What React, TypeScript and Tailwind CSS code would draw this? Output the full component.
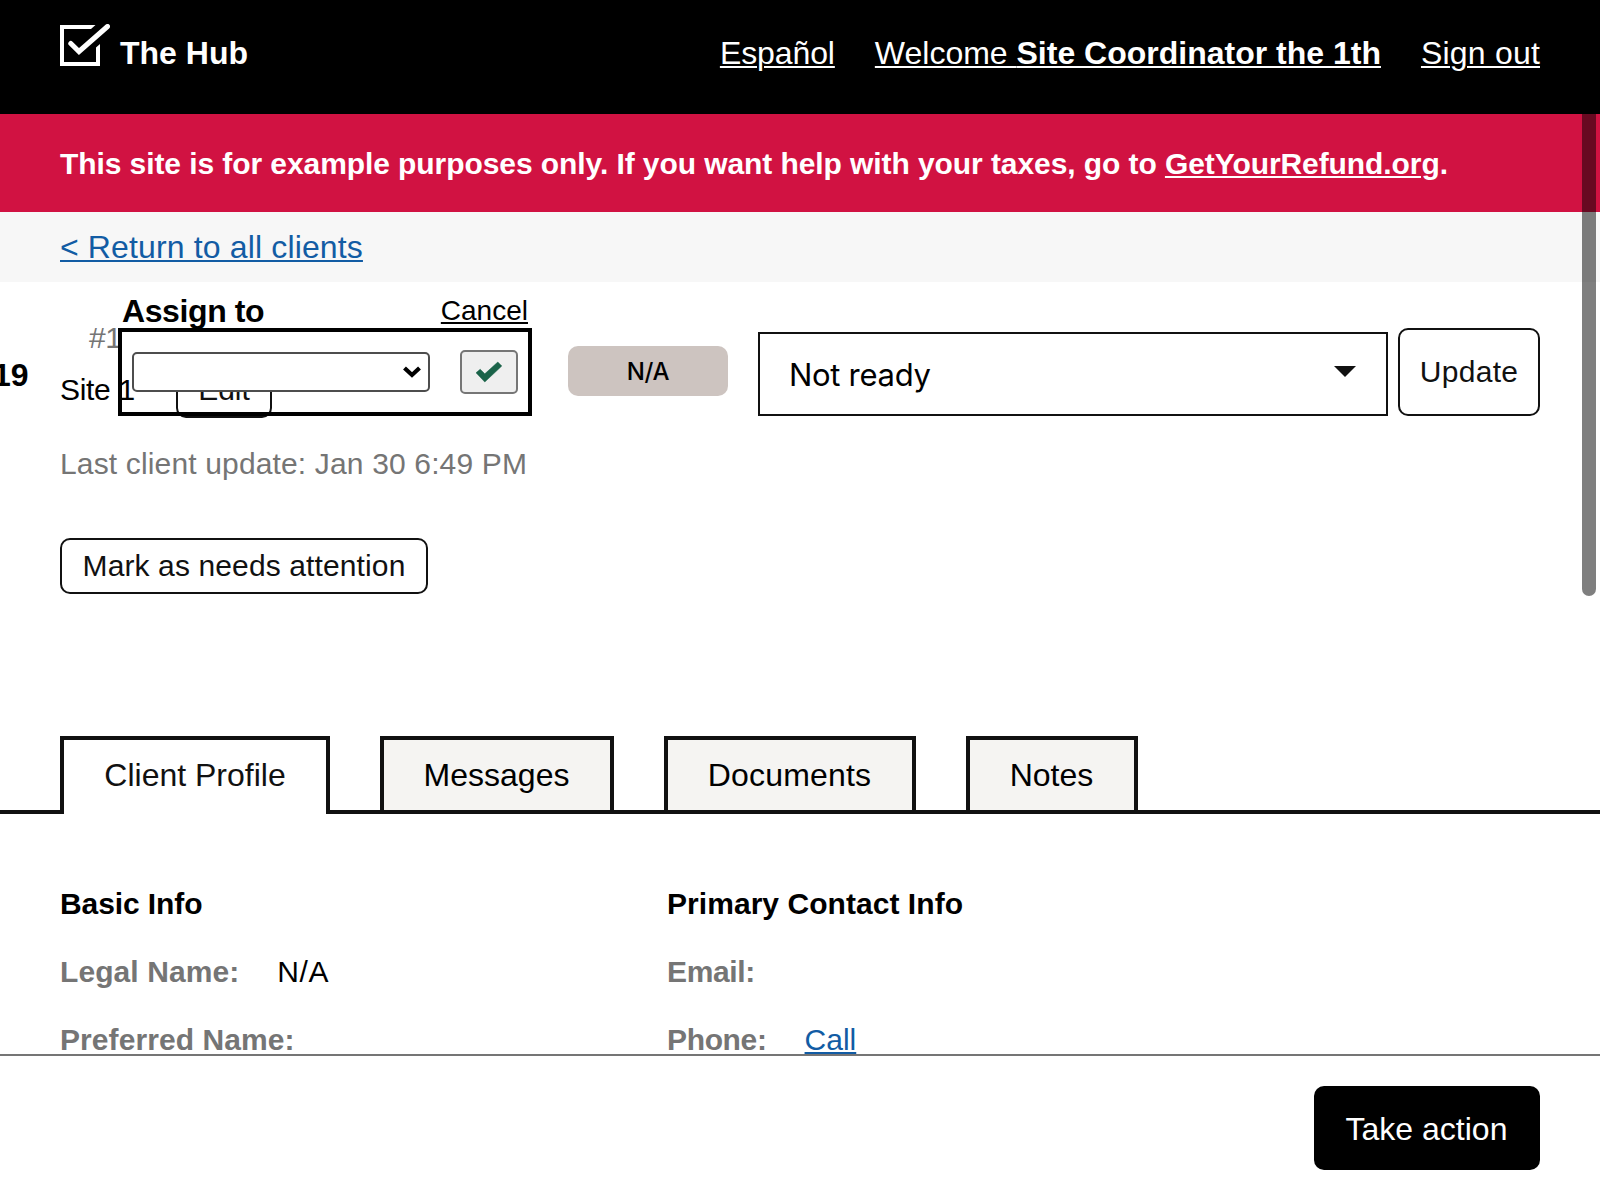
import React from "react";

const link = "underline decoration-2 underline-offset-[2px]";

function Logo() {
  return (
    <svg width="50" height="44" viewBox="0 0 50 44" fill="none" className="mt-6 shrink-0">
      <path d="M35.5 1L31 5H4V38H36V23.5L40 20V42H0V1Z" fill="#fff" />
      <path d="M10.800 19.500L19 27.500L47.500 2.500" stroke="#fff" strokeWidth="5" strokeLinecap="round" />
    </svg>
  );
}

function Header() {
  return (
    <header className="flex h-[114px] shrink-0 justify-between bg-black px-[60px] text-[32px] leading-[40px] text-white">
      <div className="flex gap-[10px]">
        <Logo />
        <span className="mt-[33px] font-bold">The Hub</span>
      </div>
      <nav className="mt-[33px] flex gap-[40px]">
        <a className={`${link} tracking-[-0.1px]`}>Español</a>
        <a className={link}>
          Welcome <b>Site Coordinator the 1th</b>
        </a>
        <a className={`${link} tracking-[0.2px]`}>Sign out</a>
      </nav>
    </header>
  );
}

function AssignPopup() {
  return (
    <div className="absolute left-[118px] top-[10px] w-[414px]">
      <div className="flex h-[36px] items-center justify-between pl-[4px] pr-1 pt-[2px]">
        <span className="text-[32px] font-bold leading-[40px] tracking-[-0.4px]">Assign to</span>
        <a className={`${link} text-[28px] leading-[36px]`}>Cancel</a>
      </div>
      <div className="flex h-[88px] items-center justify-between border-4 border-black px-[10px]">
        <div className="flex h-[40px] w-[298px] items-center justify-end rounded-[5px] border-2 border-[#4d4d4d] bg-white pr-[7px]">
          <svg width="18" height="12" viewBox="0 0 18 12" fill="none">
            <path d="M1.500 2L9 9L16.500 2" stroke="#000" strokeWidth="4.200" />
          </svg>
        </div>
        <div className="flex h-[44px] w-[58px] items-center justify-center rounded-[5px] border-2 border-[#767676] bg-[#efefef]">
          <svg width="26" height="22" viewBox="0 0 26 22" fill="none">
            <path d="M0 11.800L4.200 8.200L8.800 12.800L21.800 1L25.800 5L8.800 21Z" fill="#1a6349" stroke="#1a6349" strokeWidth="0.500" strokeLinejoin="round" />
          </svg>
        </div>
      </div>
    </div>
  );
}

const outline = "flex items-center justify-center rounded-[10px] border-2 border-[#111] text-[#111]";

function ClientHeader() {
  return (
    <section className="relative flex h-[454px] shrink-0 px-[60px] text-[30px] leading-[36px]">
      <div className="absolute left-0 top-[73px] -ml-[7px] text-[32px] font-bold leading-[40px]">19</div>
      <div className="w-[508px] shrink-0 pt-[38px]">
        <div className="pl-[29px] tracking-[-0.5px] text-[#757575]">#1</div>
        <div className="mt-[6px] flex items-center">
          <span className="w-[116px] whitespace-nowrap tracking-[-0.3px]">Site 1</span>
          <div className={`${outline} h-[56px] w-[96px]`}>Edit</div>
        </div>
        <div className="mt-[28px] tracking-[0.150px] text-[#757575]">Last client update: Jan 30 6:49 PM</div>
        <div className={`${outline} mt-[56px] h-[56px] w-[368px] tracking-[0.12px]`}>Mark as needs attention</div>
      </div>
      <div className="mt-[46px] flex h-[88px] flex-1 items-end">
        <div className="mb-5 mr-[30px] flex h-[50px] w-[160px] items-center justify-center rounded-[10px] bg-[#cdc4c0] pt-[2px] font-[Inter] text-[24px] font-medium tracking-[-0.4px]">
          N/A
        </div>
        <div className="flex h-[84px] flex-1 items-center justify-between border-2 border-[#111] pl-[29px] pr-[30px]">
          <span className="pt-[2px] font-[Inter] text-[31px] tracking-[-0.3px]">Not ready</span>
          <svg width="22" height="11" viewBox="0 0 22 11" className="-mt-[5px]">
            <path d="M0 0H22L11 11Z" fill="#111" />
          </svg>
        </div>
        <div className={`${outline} ml-[10px] h-[88px] w-[142px] tracking-[0.300px]`}>Update</div>
      </div>
      <AssignPopup />
    </section>
  );
}

function Tabs() {
  const tab = "flex h-[74px] items-center justify-center border-x-4 border-t-4 border-[#111] bg-[#f5f4f2] pr-[1px]";
  return (
    <nav className="flex h-[78px] shrink-0 gap-[50px] border-b-4 border-[#111] pl-[60px] text-[32px]">
      <div className="z-10 flex h-[78px] w-[270px] justify-center border-x-4 border-t-4 border-[#111] bg-white leading-[70px] text-[#111]">
        Client Profile
      </div>
      <div className={`${tab} w-[234px]`}>Messages</div>
      <div className={`${tab} w-[252px] tracking-[0.2px]`}>Documents</div>
      <div className={`${tab} w-[172px]`}>Notes</div>
    </nav>
  );
}

function Field({ label, children }: { label: string; children?: React.ReactNode }) {
  return (
    <div className="mt-[32px] flex gap-[38px]">
      <b className="text-[#757575]">{label}</b>
      {children}
    </div>
  );
}

export default function App() {
  return (
    <div className="relative flex h-[1200px] w-[1600px] flex-col overflow-hidden bg-white font-['Liberation_Sans',Arial,sans-serif] text-black">
      <Header />
      <div className="flex h-[98px] shrink-0 items-center bg-[#d11242] pl-[60px] text-[30px] font-bold text-white">
        <p className="whitespace-nowrap tracking-[-0.08px]">
          This site is for example purposes only. If you want help with your taxes, go to{" "}
          <a className={link}>GetYourRefund.org</a>.
        </p>
      </div>
      <div className="flex h-[70px] shrink-0 items-center bg-[#f7f7f7] pl-[60px] text-[32px]">
        <a className={`${link} tracking-[0.14px] text-[#125ca4]`}>&lt; Return to all clients</a>
      </div>
      <ClientHeader />
      <Tabs />
      <main className="flex min-h-0 flex-1 overflow-hidden pl-[60px] pt-[72px] text-[30px] leading-[36px]">
        <div className="w-[607px] tracking-[0.080px]">
          <h2 className="font-bold tracking-[-0.100px]">Basic Info</h2>
          <Field label="Legal Name:">
            <span className="tracking-[0.600px]">N/A</span>
          </Field>
          <Field label="Preferred Name:" />
        </div>
        <div className="tracking-[-0.350px]">
          <h2 className="font-bold tracking-[0.050px]">Primary Contact Info</h2>
          <Field label="Email:" />
          <Field label="Phone:">
            <a className={`${link} tracking-[0px] text-[#125ca4]`}>Call</a>
          </Field>
        </div>
      </main>
      <footer className="flex h-[146px] shrink-0 justify-end border-t-2 border-[#757575] bg-white pr-[60px] pt-[30px]">
        <div className="flex h-[84px] w-[226px] items-center justify-center rounded-[10px] bg-black pr-[1px] pt-[2px] text-[32px] text-white">
          Take action
        </div>
      </footer>
      <div className="absolute left-[1582px] top-[114px] h-[482px] w-[14px] rounded-b-[7px] bg-black/50" />
    </div>
  );
}
